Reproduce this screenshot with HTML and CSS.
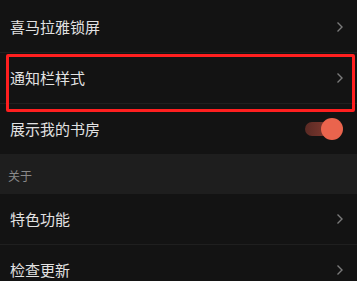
FILE: index.html
```html
<!DOCTYPE html>
<html lang="zh">
<head>
<meta charset="utf-8">
<link rel="stylesheet" href="styles.css">
</head>
<body>
<div class="list">
  <div class="row line"><span class="label">喜马拉雅锁屏</span><svg class="chev" width="8" height="12" viewBox="0 0 8 12"><path d="M1.5 1.5 L6 6 L1.5 10.5" fill="none" stroke="#7a7a7a" stroke-width="1.4"/></svg></div>
  <div class="row line"><span class="label">通知栏样式</span><svg class="chev" width="8" height="12" viewBox="0 0 8 12"><path d="M1.5 1.5 L6 6 L1.5 10.5" fill="none" stroke="#7a7a7a" stroke-width="1.4"/></svg></div>
  <div class="row"><span class="label">展示我的书房</span><div class="toggle"><div class="track"></div><div class="knob"></div></div></div>
  <div class="header">关于</div>
  <div class="row line"><span class="label">特色功能</span><svg class="chev" width="8" height="12" viewBox="0 0 8 12"><path d="M1.5 1.5 L6 6 L1.5 10.5" fill="none" stroke="#7a7a7a" stroke-width="1.4"/></svg></div>
  <div class="row"><span class="label">检查更新</span><svg class="chev" width="8" height="12" viewBox="0 0 8 12"><path d="M1.5 1.5 L6 6 L1.5 10.5" fill="none" stroke="#7a7a7a" stroke-width="1.4"/></svg></div>
  <div class="highlight"></div>
</div>
</body>
</html>
```
FILE: styles.css
```css
html, body {
  margin: 0;
  padding: 0;
  background: #131313;
  overflow: hidden;
}
body {
  font-family: "Noto Sans CJK SC", "Noto Sans", sans-serif;
}
.list {
  position: relative;
  padding-top: 2px;
}
.row {
  height: 50px;
  display: flex;
  align-items: center;
  justify-content: space-between;
  padding: 0 12px 0 10px;
}
.line {
  border-bottom: 1px solid #1f1f1f;
}
.label {
  color: #e2e2e2;
  font-size: 15px;
  line-height: 20px;
}
.chev {
  display: block;
  margin-right: 1px;
}
.header {
  height: 40px;
  background: #1e1e1e;
  color: #8a8a8a;
  font-size: 12px;
  display: flex;
  align-items: center;
  padding: 2px 0 0 8px;
  box-sizing: border-box;
}
.toggle {
  position: relative;
  width: 38px;
  height: 22px;
  margin-right: 2px;
}
.track {
  position: absolute;
  left: 0;
  top: 4px;
  width: 30px;
  height: 14px;
  border-radius: 7px;
  background: linear-gradient(90deg, #5a2a24, #8a3d32);
}
.knob {
  position: absolute;
  right: 0;
  top: 0;
  width: 22px;
  height: 22px;
  border-radius: 50%;
  background: #ea644d;
}
.highlight {
  position: absolute;
  left: 6px;
  top: 54px;
  width: 349px;
  height: 58px;
  box-sizing: border-box;
  border: 3px solid #ff1f1f;
  border-radius: 2px;
}
```
